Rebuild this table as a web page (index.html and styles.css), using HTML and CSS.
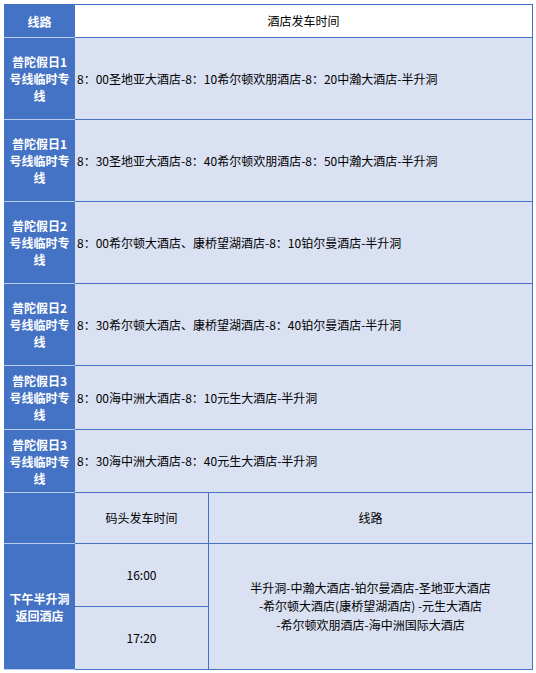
FILE: index.html
```html
<!DOCTYPE html>
<html lang="zh-CN">
<head>
<meta charset="utf-8">
<title>酒店发车时间</title>
<link rel="stylesheet" href="styles.css">
</head>
<body>
<div class="sheet">
<table class="bus">
  <colgroup>
    <col class="c-side">
    <col class="c-time">
    <col class="c-route">
  </colgroup>
  <tr class="r-head">
    <td class="side">线路</td>
    <td class="head" colspan="2">酒店发车时间</td>
  </tr>
  <tr class="r-tall">
    <td class="side">普陀假日1<br>号线临时专<br>线</td>
    <td class="plain" colspan="2">8：00圣地亚大酒店-8：10希尔顿欢朋酒店-8：20中瀚大酒店-半升洞</td>
  </tr>
  <tr class="r-tall">
    <td class="side">普陀假日1<br>号线临时专<br>线</td>
    <td class="plain" colspan="2">8：30圣地亚大酒店-8：40希尔顿欢朋酒店-8：50中瀚大酒店-半升洞</td>
  </tr>
  <tr class="r-tall">
    <td class="side">普陀假日2<br>号线临时专<br>线</td>
    <td class="plain" colspan="2">8：00希尔顿大酒店、康桥望湖酒店-8：10铂尔曼酒店-半升洞</td>
  </tr>
  <tr class="r-tall">
    <td class="side">普陀假日2<br>号线临时专<br>线</td>
    <td class="plain" colspan="2">8：30希尔顿大酒店、康桥望湖酒店-8：40铂尔曼酒店-半升洞</td>
  </tr>
  <tr class="r-mid">
    <td class="side">普陀假日3<br>号线临时专<br>线</td>
    <td class="plain" colspan="2">8：00海中洲大酒店-8：10元生大酒店-半升洞</td>
  </tr>
  <tr class="r-mid2">
    <td class="side">普陀假日3<br>号线临时专<br>线</td>
    <td class="plain" colspan="2">8：30海中洲大酒店-8：40元生大酒店-半升洞</td>
  </tr>
  <tr class="r-sub">
    <td class="side"></td>
    <td class="center">码头发车时间</td>
    <td class="center">线路</td>
  </tr>
  <tr class="r-mid2">
    <td class="side" rowspan="2">下午半升洞<br>返回酒店</td>
    <td class="center">16:00</td>
    <td class="center route" rowspan="2">半升洞-中瀚大酒店-铂尔曼酒店-圣地亚大酒店<br>-希尔顿大酒店(康桥望湖酒店) -元生大酒店<br>-希尔顿欢朋酒店-海中洲国际大酒店</td>
  </tr>
  <tr class="r-mid2">
    <td class="center">17:20</td>
  </tr>
</table>
</div>
</body>
</html>
```

FILE: styles.css
```css
html, body {
  margin: 0;
  padding: 0;
  background: #ffffff;
}

.sheet {
  padding: 4px;
}

.bus {
  border-collapse: collapse;
  table-layout: fixed;
  width: 528px;
  font-family: "Noto Sans CJK SC", "Microsoft YaHei", sans-serif;
  font-size: 12px;
  color: #000000;
}

.c-side { width: 70px; }
.c-time { width: 134px; }
.c-route { width: 324px; }

.r-head { height: 33px; }
.r-tall { height: 82px; }
.r-mid { height: 64px; }
.r-mid2 { height: 63px; }
.r-sub { height: 51px; }

.bus td {
  padding: 0 2px;
  border: 1px solid #4472c4;
  background: #d9e1f2;
  vertical-align: middle;
  line-height: 18px;
  white-space: nowrap;
}

.bus td.side {
  background: #4472c4;
  color: #ffffff;
  font-weight: bold;
  text-align: center;
  line-height: 17px;
  padding: 0;
  border-color: #4472c4;
  border-bottom-color: #b9cbee;
}

.bus td.head {
  background: #ffffff;
  text-align: center;
}

.bus td.plain {
  text-align: left;
}

.bus td.center {
  text-align: center;
}

.bus td.route {
  line-height: 18.5px;
}
```
